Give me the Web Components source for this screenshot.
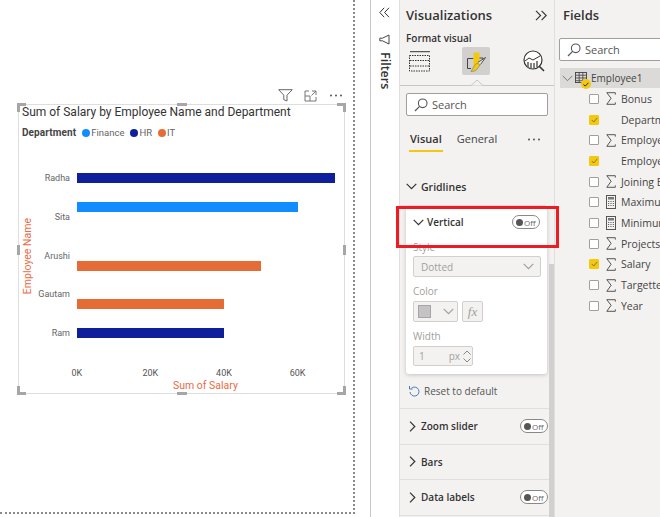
<!DOCTYPE html>
<html>
<head>
<meta charset="utf-8">
<style>
  html, body { margin:0; padding:0; height:517px; overflow:hidden; background:#fff; }
</style>
</head>
<body>
<bi-report>
  <report-canvas slot="canvas">
    <salary-visual></salary-visual>
  </report-canvas>
  <filter-rail slot="rail"></filter-rail>
  <viz-pane slot="viz"></viz-pane>
  <fields-pane slot="fields"></fields-pane>
</bi-report>

<script>
const CHEV_DOWN = '<svg width="11" height="7" viewBox="0 0 11 7"><path d="M.7.9l4.8 4.8L10.3.9" fill="none" stroke="currentColor" stroke-width="1.2"/></svg>';
const CHEV_RIGHT = '<svg width="7" height="11" viewBox="0 0 7 11"><path d="M1 .7l4.8 4.8L1 10.3" fill="none" stroke="currentColor" stroke-width="1.2"/></svg>';
const SEARCH = '<svg width="14" height="14" viewBox="0 0 14 14"><circle cx="8.7" cy="5.3" r="4.3" fill="none" stroke="#555" stroke-width="1.1"/><path d="M5.6 8.4L1 13" stroke="#555" stroke-width="1.2"/></svg>';
const SIGMA = '<svg width="10" height="13" viewBox="0 0 10 13"><path d="M9.3 2.6V.7H.8l4.3 5.6-4.3 6h8.5v-1.9" fill="none" stroke="#555" stroke-width="1"/></svg>';
const CALC = '<svg width="10" height="14" viewBox="0 0 10 14"><rect x=".5" y=".5" width="9" height="13" fill="#f3f2f1" stroke="#555"/><rect x="2" y="2" width="6" height="2.5" fill="#777"/><path d="M2 6.5h6M2 8.5h6M2 10.5h6" stroke="#666" stroke-width="1.2" stroke-dasharray="1.2 1.2"/></svg>';

class BiReport extends HTMLElement {
  constructor() {
    super();
    this.attachShadow({ mode: 'open' });
    this.shadowRoot.innerHTML = `
      <style>
        :host { display:flex; width:660px; height:517px; overflow:hidden; font-family:"Open Sans","Noto Sans",sans-serif; }
        .gap { width:15px; flex:none; background:#fff; }
      </style>
      <slot name="canvas"></slot><div class="gap"></div>
      <slot name="rail"></slot><slot name="viz"></slot><slot name="fields"></slot>`;
  }
}

class ReportCanvas extends HTMLElement {
  constructor() {
    super();
    this.attachShadow({ mode: 'open' });
    this.shadowRoot.innerHTML = `
      <style>
        :host { display:block; flex:none; width:355px; height:514px; box-sizing:border-box; padding:104px 0 0 18px; background:#fff;
          border-right:2px dotted #8a8a8a; border-bottom:2px dotted #8a8a8a; margin-bottom:3px; }
      </style>
      <slot></slot>`;
  }
}

class SalaryVisual extends HTMLElement {
  constructor() {
    super();
    this.attachShadow({ mode: 'open' });
    const bars = [['#0f1f9b', 258, 0], ['#118dff', 221, 19], ['#e66c37', 184, 49], ['#e66c37', 147, 28], ['#0f1f9b', 147, 19]];
    const names = ['Radha', 'Sita', 'Arushi', 'Gautam', 'Ram'];
    this.shadowRoot.innerHTML = `
      <style>
        :host { display:block; position:relative; width:327px; height:290px; box-sizing:border-box; border:1.5px solid #dedede; background:#fff;
          font-family:Roboto,"Liberation Sans",sans-serif; }
        .title { position:absolute; left:3px; top:-1px; font-size:12px; line-height:17px; color:#333; white-space:nowrap; }
        .legend { position:absolute; left:3px; top:21px; display:flex; align-items:center; font-size:10px; line-height:14px; color:#666; white-space:nowrap; }
        .legend b { color:#444; margin-right:6px; letter-spacing:.1px; }
        .legend i { width:8px; height:8px; border-radius:50%; margin-right:1px; }
        .legend span { margin-right:6px; font-size:9.5px; }
        .plot { position:absolute; left:0; top:67px; width:100%; display:flex; }
        .labels { width:57px; flex:none; display:flex; flex-direction:column; align-items:flex-end; gap:25.8px; padding-right:6px; box-sizing:border-box; font-size:9px; line-height:13px; color:#666; }
        .bars { display:flex; flex-direction:column; padding-top:1px; margin-left:.5px; }
        .bars div { height:10px; }
        .ticks { position:absolute; left:21px; top:262px; display:flex; font-size:9px; line-height:12px; color:#555; }
        .ticks span { width:73.6px; text-align:center; }
        .xname { position:absolute; left:154px; top:274px; font-size:10.5px; line-height:14px; color:#ec6a45; }
        .yname { position:absolute; left:2px; top:113px; writing-mode:vertical-rl; transform:rotate(180deg); font-size:10.5px; line-height:14px; color:#ec6a45; white-space:nowrap; }
        .vis-tools { position:absolute; left:259px; top:-16px; display:flex; align-items:center; gap:11px; }
        .h { position:absolute; background:#a6a6a6; }
      </style>
      <div class="vis-tools">
        <svg width="15" height="13" viewBox="0 0 15 13"><path d="M.7.7h13.6L9 6.2V12l-3.2-1.3V6.2z" fill="none" stroke="#666"/></svg>
        <svg width="13" height="12" viewBox="0 0 13 12"><path d="M5 1H1v10h11V7M1 6h5v5M8 1h4v4M12 1L7.5 5.5" fill="none" stroke="#777"/></svg>
        <svg width="14" height="3" viewBox="0 0 14 3" style="margin-left:1px"><circle cx="2" cy="1.5" r="1" fill="#555"/><circle cx="7" cy="1.5" r="1" fill="#555"/><circle cx="12" cy="1.5" r="1" fill="#555"/></svg>
      </div>
      <div class="title">Sum of Salary by Employee Name and Department</div>
      <div class="legend"><b>Department</b>
        <i style="background:#118dff"></i><span>Finance</span>
        <i style="background:#0f1f9b"></i><span>HR</span>
        <i style="background:#e66c37"></i><span>IT</span>
      </div>
      <div class="plot">
        <div class="labels">${names.map(n => `<span>${n}</span>`).join('')}</div>
        <div class="bars">${bars.map(b => `<div style="background:${b[0]};width:${b[1]}px;margin-top:${b[2]}px"></div>`).join('')}</div>
      </div>
      <div class="ticks"><span>0K</span><span>20K</span><span>40K</span><span>60K</span></div>
      <div class="xname">Sum of Salary</div>
      <div class="yname">Employee Name</div>
      <div class="h" style="left:-2px;top:-2px;width:9px;height:3px"></div><div class="h" style="left:-2px;top:-2px;width:3px;height:9px"></div>
      <div class="h" style="right:-2px;top:-2px;width:9px;height:3px"></div><div class="h" style="right:-2px;top:-2px;width:3px;height:9px"></div>
      <div class="h" style="left:-2px;bottom:-2px;width:9px;height:3px"></div><div class="h" style="left:-2px;bottom:-2px;width:3px;height:9px"></div>
      <div class="h" style="right:-2px;bottom:-2px;width:9px;height:3px"></div><div class="h" style="right:-2px;bottom:-2px;width:3px;height:9px"></div>
      <div class="h" style="left:158px;top:-2px;width:10px;height:3px"></div>
      <div class="h" style="left:158px;bottom:-2px;width:10px;height:3px"></div>
      <div class="h" style="left:-2px;top:140px;width:3px;height:10px"></div>
      <div class="h" style="right:-2px;top:140px;width:3px;height:10px"></div>`;
  }
}

class FilterRail extends HTMLElement {
  constructor() {
    super();
    this.attachShadow({ mode: 'open' });
    this.shadowRoot.innerHTML = `
      <style>
        :host { display:flex; flex:none; flex-direction:column; align-items:center; width:29px; box-sizing:border-box; border-left:1px solid #c8c6c4; background:#fff; color:#333; padding-top:7px; padding-right:1px; }
        .f { margin-top:16px; }
        .t { writing-mode:vertical-rl; font-size:12.5px; font-weight:600; line-height:16px; margin-top:7px; }
      </style>
      <svg width="11" height="11" viewBox="0 0 11 11"><path d="M5.2.8L.8 5.5l4.4 4.7M10 .8L5.6 5.5l4.4 4.7" fill="none" stroke="#333" stroke-width="1"/></svg>
      <svg class="f" width="11" height="11" viewBox="0 0 11 11"><path d="M.8 4.2h2.6L10 1v9L3.4 6.8H.8z" fill="none" stroke="#444" stroke-width="1"/></svg>
      <div class="t">Filters</div>`;
  }
}

class TogglePill extends HTMLElement {
  constructor() {
    super();
    this.attachShadow({ mode: 'open' });
    this.shadowRoot.innerHTML = `
      <style>
        :host { display:inline-flex; align-items:center; box-sizing:border-box; width:28px; height:14px; border:1px solid #8a8886; border-radius:7px; padding-left:3px; font-size:8px; font-weight:400; color:#666; background:#fff; }
        i { width:7px; height:7px; border-radius:50%; background:#555; margin-right:1px; }
      </style>
      <i></i>Off`;
  }
}

class FormatRow extends HTMLElement {
  static get observedAttributes() { return ['label', 'toggle']; }
  constructor() {
    super();
    this.attachShadow({ mode: 'open' });
  }
  connectedCallback() { this.render(); }
  attributeChangedCallback() { this.render(); }
  render() {
    const label = this.getAttribute('label') || '';
    const toggle = this.hasAttribute('toggle');
    this.shadowRoot.innerHTML = `
      <style>
        :host { display:flex; align-items:center; box-sizing:border-box; height:35.5px; width:151px; padding:0 3px 0 9px; border-bottom:1px solid #e1dfdd; font-size:10px; font-weight:600; color:#333; }
        span { margin-left:5px; flex:1; }
        svg { flex:none; }
      </style>
      ${CHEV_RIGHT}<span>${label}</span>${toggle ? '<toggle-pill></toggle-pill>' : ''}`;
  }
}

class VerticalCard extends HTMLElement {
  constructor() {
    super();
    this.attachShadow({ mode: 'open' });
    this.shadowRoot.innerHTML = `
      <style>
        :host { display:block; position:relative; box-sizing:border-box; width:141px; height:167px; margin:1px 0 0 6px; background:#fff; border-radius:3px; box-shadow:0 1px 4px rgba(0,0,0,.2); padding:0 7px; color:#a19f9d; font-size:10px; }
        .head { display:flex; align-items:center; height:30px; color:#333; font-weight:600; }
        .head span { margin-left:3px; flex:1; }
        label { display:block; line-height:14px; margin-top:3px; }
        .box { box-sizing:border-box; border:1px solid #d2d0ce; border-radius:2px; background:#f3f2f1; display:flex; align-items:center; }
        .style { height:21px; margin-top:2px; padding:0 6px 0 7px; justify-content:space-between; width:128px; }
        .color-l { margin-top:7px; }
        .row { display:flex; gap:4px; margin-top:3px; }
        .sw { width:45px; height:21px; padding:0 0 0 4px; gap:12px; }
        .sw i { width:13px; height:13px; background:#c4c4c4; border:1px solid #a6a6a6; box-sizing:border-box; flex:none; }
        .fx { width:21px; height:21px; justify-content:center; font:italic 13px "Liberation Serif",serif; }
        .w-l { margin-top:7px; }
        .px { width:60px; height:20px; margin-top:3px; padding:0 1px 0 5px; justify-content:space-between; }
        .spin { display:flex; flex-direction:column; gap:3px; }
      </style>
      <div class="head">${CHEV_DOWN}<span>Vertical</span><toggle-pill></toggle-pill></div>
      <label>Style</label>
      <div class="box style">Dotted ${CHEV_DOWN}</div>
      <label class="color-l">Color</label>
      <div class="row"><div class="box sw"><i></i>${CHEV_DOWN}</div><div class="box fx">fx</div></div>
      <label class="w-l">Width</label>
      <div class="box px"><span>1</span><span style="margin-left:auto;margin-right:3px">px</span>
        <div class="spin">
          <svg width="8" height="5" viewBox="0 0 8 5"><path d="M.5 4.5L4 1l3.5 3.5" fill="none" stroke="#8a8886"/></svg>
          <svg width="8" height="5" viewBox="0 0 8 5"><path d="M.5.5L4 4 7.5.5" fill="none" stroke="#8a8886"/></svg>
        </div>
      </div>`;
  }
}

class VizPane extends HTMLElement {
  constructor() {
    super();
    this.attachShadow({ mode: 'open' });
    this.shadowRoot.innerHTML = `
      <style>
        :host { display:block; position:relative; flex:none; width:156px; height:517px; box-sizing:border-box; background:#f3f2f1; border-left:1px solid #e1dfdd; border-right:1px solid #e1dfdd; color:#333; overflow:hidden; }
        .top { display:flex; justify-content:space-between; align-items:center; padding:0 6px; height:30px; margin-bottom:1px; font-size:13px; font-weight:600; }
        .fv { padding-left:6px; font-size:10px; font-weight:600; line-height:14px; }
        .icons { display:flex; align-items:center; height:28px; margin-top:2px; padding-left:9px; }
        .sel { width:28px; height:28px; background:#d2d0ce; border-radius:2px; margin:0 33px 0 31px; display:flex; align-items:center; justify-content:center; }
        .rule { position:relative; height:1px; background:#c8c6c4; margin-top:10px; }
        .rule svg { position:absolute; left:69px; top:-6px; }
        .search { display:flex; align-items:center; gap:4px; box-sizing:border-box; width:142px; height:23px; margin:7px 0 0 6px; padding-left:7px; background:#fff; border:1px solid #a19f9d; border-radius:2px; font-size:11px; color:#555; }
        .tabs { display:flex; align-items:flex-start; height:33px; margin-top:14px; padding-left:9px; font-size:11px; line-height:18px; }
        .tabs b { font-weight:600; border-bottom:2px solid #f2c811; padding:0 1px 2px 1px; margin-right:14px; }
        .tabs span { color:#444; }
        .tabs svg { margin:8px 13px 0 auto; }
        .grid-h { display:flex; align-items:center; height:38px; margin-top:5px; padding-left:6px; font-size:10.5px; font-weight:600; gap:4px; width:145px; box-sizing:border-box; border-bottom:1px solid #e1dfdd; }
        .reset { display:flex; align-items:center; gap:4px; height:35px; padding-left:8px; font-size:10px; color:#555; width:151px; box-sizing:border-box; border-bottom:1px solid #e1dfdd; }
        .sb { position:absolute; right:0; top:264px; width:5px; bottom:0; background:#d2d0ce; }
      </style>
      <div class="top"><span>Visualizations</span>
        <svg width="13" height="11" viewBox="0 0 13 11"><path d="M1 .8l4.6 4.7L1 10.2M6.6.8l4.6 4.7-4.6 4.7" fill="none" stroke="#333" stroke-width="1.1"/></svg></div>
      <div class="fv">Format visual</div>
      <div class="icons">
        <svg width="22" height="21" viewBox="0 0 22 21"><path d="M1 .7h20" stroke="#333"/><rect x=".5" y="4.5" width="20" height="15.5" fill="none" stroke="#333" stroke-dasharray="1.5 1"/><path d="M1 9.5h20M1 15h20" stroke="#333" stroke-dasharray="1.5 1"/></svg>
        <div class="sel"><svg width="20" height="22" viewBox="0 0 20 22">
          <path d="M7.5 8.5H1.5V18.5H5M13 8h4v2.5" fill="none" stroke="#444"/>
          <rect x="7.5" y="2.5" width="6" height="14" fill="#f2c811"/>
          <path d="M5 21.5c3.5 0 5.5-1 7-3.5l2-3-3-2-3 3.2c-1.2 2-1.8 3.6-3 5.3z" fill="#f2c811" stroke="#777" stroke-width=".6"/>
          <path d="M12 12.3L19.5 7.5 14.5 14.5" fill="#e8e6e4" stroke="#444" stroke-width=".9"/></svg></div>
        <svg width="22" height="23" viewBox="0 0 22 23"><circle cx="10" cy="10" r="9" fill="#fff" stroke="#333" stroke-width="1.2"/><path d="M2 11l4-3 4 2 7-4" fill="none" stroke="#333"/><path d="M5 12v6M8 13v6M11 13v6M14 11v6" stroke="#666" stroke-width="1.6"/><path d="M16 16l5 5" stroke="#333" stroke-width="1.6"/></svg>
      </div>
      <div class="rule"><svg width="16" height="7" viewBox="0 0 16 7"><path d="M0 6.5h2L8 1l6 5.5h2" fill="#f3f2f1" stroke="#c8c6c4"/></svg></div>
      <div class="search">${SEARCH}Search</div>
      <div class="tabs"><b>Visual</b><span>General</span>
        <svg width="14" height="3" viewBox="0 0 14 3"><circle cx="2" cy="1.5" r=".9" fill="#444"/><circle cx="7" cy="1.5" r=".9" fill="#444"/><circle cx="12" cy="1.5" r=".9" fill="#444"/></svg></div>
      <div class="grid-h">${CHEV_DOWN}<span>Gridlines</span></div>
      <vertical-card></vertical-card>
      <div class="reset"><svg width="12" height="12" viewBox="0 0 12 12"><path d="M3.5 3.2A4.5 4.5 0 1 1 2 7" fill="none" stroke="#4a7fb5" stroke-width="1"/><path d="M1.5 1v3h3" fill="none" stroke="#4a7fb5"/></svg>Reset to default</div>
      <format-row label="Zoom slider" toggle></format-row>
      <format-row label="Bars"></format-row>
      <format-row label="Data labels" toggle></format-row>
      <div class="sb"></div>`;
  }
}

class FieldRow extends HTMLElement {
  constructor() {
    super();
    this.attachShadow({ mode: 'open' });
  }
  connectedCallback() {
    const kind = this.getAttribute('kind');
    const icon = kind === 'sigma' ? SIGMA : kind === 'calc' ? CALC : '';
    const on = this.hasAttribute('checked');
    this.shadowRoot.innerHTML = `
      <style>
        :host { display:flex; align-items:center; height:20.7px; padding-left:34px; font-size:10.5px; color:#444; white-space:nowrap; }
        .c { box-sizing:border-box; width:10px; height:10px; flex:none; border:1px solid ${on ? '#f2c811' : '#a19f9d'}; background:${on ? '#f2c811' : '#fff'}; border-radius:1px; display:flex; align-items:center; justify-content:center; }
        .i { width:10px; flex:none; margin:0 5px 0 7px; display:flex; justify-content:center; }
      </style>
      <div class="c">${on ? '<svg width="7" height="6" viewBox="0 0 7 6"><path d="M.8 3l2 2L6.3.8" fill="none" stroke="#7a6500" stroke-width=".8"/></svg>' : ''}</div>
      <div class="i">${icon}</div><span>${this.getAttribute('label')}</span>`;
  }
}

class FieldsPane extends HTMLElement {
  constructor() {
    super();
    this.attachShadow({ mode: 'open' });
    this.shadowRoot.innerHTML = `
      <style>
        :host { display:block; flex:none; width:105px; height:517px; box-sizing:border-box; background:#f3f2f1; color:#333; overflow:hidden; position:relative; }
        .t { padding-left:8px; height:30px; line-height:30px; font-size:13px; font-weight:600; }
        .search { display:flex; align-items:center; gap:4px; box-sizing:border-box; width:130px; height:23px; margin:8px 0 0 4px; padding-left:7px; background:#fff; border:1px solid #a19f9d; border-radius:2px; font-size:11px; color:#555; }
        .table { display:flex; align-items:center; height:20px; margin:7px 0 0 5px; padding-left:2px; background:#dcdad8; font-size:10px; white-space:nowrap; color:#444; }
        .table svg { flex:none; }
        .tic { position:relative; width:13px; height:12px; margin:0 3px 0 2px; }
        .dot { position:absolute; left:6px; top:7px; width:10px; height:10px; border-radius:50%; background:#f2c811; display:flex; align-items:center; justify-content:center; }
        .list { padding-top:.5px; }
      </style>
      <div class="t">Fields</div>
      <div class="search">${SEARCH}Search</div>
      <div class="table"><svg width="11" height="7" viewBox="0 0 11 7"><path d="M.7.9l4.8 4.8L10.3.9" fill="none" stroke="#777" stroke-width="1"/></svg>
        <div class="tic"><svg width="12" height="11" viewBox="0 0 13 12" style="display:block"><rect x=".5" y=".5" width="12" height="11" fill="none" stroke="#444"/><path d="M.5 3.5h12M.5 6.5h12M.5 9.5h12M4.5.5v11M8.5.5v11" stroke="#444" stroke-width=".9"/></svg>
          <div class="dot"><svg width="6" height="5" viewBox="0 0 6 5"><path d="M.6 2.5l1.6 1.6L5.4.8" fill="none" stroke="#222" stroke-width="1"/></svg></div></div>
        <span>Employee1</span></div>
      <div class="list">
        <field-row kind="sigma" label="Bonus"></field-row>
        <field-row checked label="Department"></field-row>
        <field-row kind="sigma" label="Employee ID"></field-row>
        <field-row checked label="Employee Name"></field-row>
        <field-row kind="sigma" label="Joining Bonus"></field-row>
        <field-row kind="calc" label="Maximum Salary"></field-row>
        <field-row kind="calc" label="Minimum Salary"></field-row>
        <field-row kind="sigma" label="Projects"></field-row>
        <field-row kind="sigma" checked label="Salary"></field-row>
        <field-row kind="sigma" label="Targetted Salary"></field-row>
        <field-row kind="sigma" label="Year"></field-row>
      </div>`;
  }
}

class RedHighlight extends HTMLElement {
  constructor() {
    super();
    this.attachShadow({ mode: 'open' });
    this.shadowRoot.innerHTML = `<style>:host { position:absolute; left:396px; top:206px; width:163px; height:42px; box-sizing:border-box; border:3.5px solid #ed1c24; pointer-events:none; }</style>`;
  }
}

customElements.define('bi-report', BiReport);
customElements.define('report-canvas', ReportCanvas);
customElements.define('salary-visual', SalaryVisual);
customElements.define('filter-rail', FilterRail);
customElements.define('toggle-pill', TogglePill);
customElements.define('format-row', FormatRow);
customElements.define('vertical-card', VerticalCard);
customElements.define('viz-pane', VizPane);
customElements.define('field-row', FieldRow);
customElements.define('fields-pane', FieldsPane);
customElements.define('red-highlight', RedHighlight);
document.body.appendChild(document.createElement('red-highlight'));
</script>
</body>
</html>
